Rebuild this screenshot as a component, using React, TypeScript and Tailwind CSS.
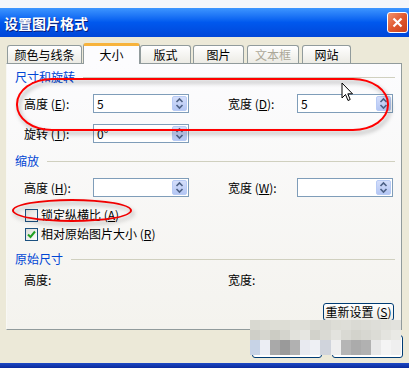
import React from "react";

const font = "[font-family:'Noto_Sans_CJK_SC','Liberation_Sans',sans-serif]";

function Spinner() {
  return (
    <div className="my-[1px] mr-[1px] flex w-[15px] flex-col items-center justify-center rounded-[2px] border border-[#B8CBF5] bg-gradient-to-b from-[#D4DEFA] to-[#B4C6F4]">
      <svg width="9" height="13" viewBox="0 0 9 13">
        <path d="M1.5 5 L4.5 2 L7.5 5" fill="none" stroke="#4D6185" strokeWidth="1.6" />
        <path d="M1.5 8 L4.5 11 L7.5 8" fill="none" stroke="#4D6185" strokeWidth="1.6" />
      </svg>
    </div>
  );
}

function NumBox({ value }: { value?: string }) {
  return (
    <div className="flex h-[19px] w-[96px] shrink-0 border border-[#7F9DB9] bg-white">
      <div className="flex-1 pl-[3px] text-[12px] leading-[17px] text-black">{value}</div>
      <Spinner />
    </div>
  );
}

function Field({ label, k, value }: { label: string; k: string; value?: string }) {
  return (
    <div className="flex w-[204px] shrink-0 items-center pl-[17px]">
      <div className="w-[69px] shrink-0 text-[12px] leading-[14px] text-black">
        {label} (<span className="underline">{k}</span>):
      </div>
      <NumBox value={value} />
    </div>
  );
}

function Heading({ text }: { text: string }) {
  return (
    <div className="flex h-[14px] items-center gap-[8px] pl-[8px] pr-[6px]">
      <span className="text-[12px] leading-[14px] text-[#0046D5]">{text}</span>
      <div className="h-px flex-1 bg-[#D0D0BF]" />
    </div>
  );
}

function Check({ checked, label, k }: { checked?: boolean; label: string; k: string }) {
  return (
    <div className="flex h-[14px] items-center gap-[3px] pl-[18px]">
      <div className="flex h-[13px] w-[13px] items-center justify-center border border-[#1C5180] bg-gradient-to-br from-[#DCDCD7] to-white">
        {checked && (
          <svg width="9" height="9" viewBox="0 0 9 9">
            <path d="M1 4.5 L3.5 7 L8 1.5" fill="none" stroke="#21A121" strokeWidth="2" />
          </svg>
        )}
      </div>
      <span className="text-[12px] leading-[14px] text-black">
        {label} (<span className="underline">{k}</span>)
      </span>
    </div>
  );
}

const tabs = [
  { t: "颜色与线条", w: "w-[75px]", ml: "ml-[7px]" },
  { t: "大小", w: "w-[57px]", ml: "ml-[1px]", active: true },
  { t: "版式", w: "w-[51px]", ml: "ml-[0px]" },
  { t: "图片", w: "w-[51px]", ml: "ml-[2px]" },
  { t: "文本框", w: "w-[52px]", ml: "ml-[3px]", disabled: true },
  { t: "网站", w: "w-[49px]", ml: "ml-[3px]" },
];

const mosaic = [
  ["#D9D9D1", "#DCDCD4", "#DEDED6", "#DDDDD5", "#E0E0D9", "#DFDFD8", "#DADAD3", "#D8D8D2", "#DDDDD6", "#DEDED8", "#DADAD4", "#DCDCD6", "#DEDED9", "#E0E0DA", "#E2E2DD"],
  ["#CFCFC8", "#D6D6CF", "#CCCCC4", "#D4D4CD", "#E2E2DC", "#E6E6E1", "#D2D2CB", "#DADAD4", "#E3E3DE", "#D9D9D3", "#D3D3CC", "#D7D7D1", "#DCDCD6", "#E4E4DF", "#E9E9E5"],
  ["#C7D3E6", "#ECEEF4", "#A9A9A9", "#9A9A9A", "#B1B1B1", "#E8EAF0", "#EEF0F4", "#D0D4DC", "#EFEFEF", "#B5B5B5", "#ABABAB", "#B1B1B1", "#E8E8E8", "#F4F4F4", "#EFEFEF"],
];

export default function App() {
  return (
    <div className={`relative h-[368px] w-[409px] overflow-hidden bg-[#ECE9D8] ${font}`}>
      {/* top strip */}
      <div className="h-[8px] bg-[#F4F6FB]" />

      {/* title bar */}
      <div className="flex h-[29px] items-center bg-gradient-to-b from-[#3D95FF] via-[#0058EE] to-[#0046D8] pl-[4px]">
        <span className="text-[14px] font-bold leading-[16px] text-white [text-shadow:1px_1px_0_#0A1E7A]">
          设置图片格式
        </span>
        <div className="ml-auto mr-[1px] flex h-[21px] w-[21px] items-center justify-center rounded-[3px] border border-white bg-gradient-to-br from-[#F0916C] via-[#E0592F] to-[#C9401E]">
          <svg width="11" height="11" viewBox="0 0 11 11">
            <path d="M1.5 1.5 L9.5 9.5 M9.5 1.5 L1.5 9.5" stroke="white" strokeWidth="2.2" />
          </svg>
        </div>
      </div>

      {/* tabs */}
      <div className="mt-[6px] flex h-[20px] items-end">
        {tabs.map((tab) =>
          tab.active ? (
            <div
              key={tab.t}
              className={`relative z-10 -mb-px flex h-[21px] ${tab.w} ${tab.ml} items-center justify-center rounded-t-[3px] border-x border-t-[3px] border-x-[#919B9C] border-t-[#F7B33C] bg-[#FCFCFE] text-[12px] leading-[14px] text-black`}
            >
              {tab.t}
            </div>
          ) : (
            <div
              key={tab.t}
              className={`flex h-[18px] ${tab.w} ${tab.ml} items-center justify-center rounded-t-[3px] border-x border-t border-[#919B9C] bg-gradient-to-b from-white to-[#ECEBE5] text-[12px] leading-[14px] ${tab.disabled ? "text-[#ACA899]" : "text-black"}`}
            >
              {tab.t}
            </div>
          )
        )}
      </div>

      {/* panel */}
      <div className="ml-[6px] flex h-[267px] w-[396px] flex-col overflow-hidden border border-[#919B9C] border-l-[#F8F8F4] bg-gradient-to-b from-[#FCFCFE] to-[#F4F3EE]">
        <div className="mt-[6px]">
          <Heading text="尺寸和旋转" />
        </div>
        <div className="mt-[10px] flex">
          <Field label="高度" k="E" value="5" />
          <Field label="宽度" k="D" value="5" />
        </div>
        <div className="mt-[11px] flex">
          <Field label="旋转" k="T" value="0°" />
        </div>
        <div className="mt-[11px]">
          <Heading text="缩放" />
        </div>
        <div className="mt-[10px] flex">
          <Field label="高度" k="H" />
          <Field label="宽度" k="W" />
        </div>
        <div className="mt-[11px]">
          <Check label="锁定纵横比" k="A" />
        </div>
        <div className="mt-[5px]">
          <Check checked label="相对原始图片大小" k="R" />
        </div>
        <div className="mt-[11px]">
          <Heading text="原始尺寸" />
        </div>
        <div className="mt-[7px] flex h-[14px] text-[12px] leading-[14px] text-black">
          <div className="w-[204px] shrink-0 pl-[17px]">高度:</div>
          <div className="pl-[17px]">宽度:</div>
        </div>
        <div className="mt-[16px] flex justify-end pr-[7px]">
          <div className="flex h-[18px] w-[71px] items-center justify-center rounded-[3px] border border-[#003C74] bg-gradient-to-b from-white to-[#ECEBE6] text-[12px] leading-[14px] text-black">
            重新设置 (<span className="underline">S</span>)
          </div>
        </div>
      </div>

      {/* bottom buttons */}
      <div className="flex h-[33px] items-center justify-end gap-[10px] pr-[6px]">
        <div className="flex h-[23px] w-[70px] items-center justify-center rounded-[3px] border border-[#003C74] bg-white text-[12px] text-black">确定</div>
        <div className="flex h-[23px] w-[71px] items-center justify-center rounded-[3px] border border-[#003C74] bg-white text-[12px] text-black">取消</div>
      </div>
      <div className="h-[5px] bg-gradient-to-b from-[#1D48C4] to-[#0A2A9C]" />

      {/* mosaic over the buttons */}
      <div className="absolute left-[250px] top-[320px] grid w-[151px] grid-cols-[repeat(15,1fr)] grid-rows-[10px_10px_15px]">
        {mosaic.flat().map((c, i) => (
          <div key={i} style={{ backgroundColor: c }} />
        ))}
      </div>

      {/* red annotation ellipses */}
      <div className="absolute left-[16px] top-[78px] h-[53px] w-[373px] rounded-[36px/26px] border-[2.5px] border-[#FF0000] drop-shadow-[2px_3px_2px_rgba(0,0,0,0.35)]" />
      <div className="absolute left-[12px] top-[199px] h-[23px] w-[120px] rounded-[50%] border-[2px] border-[#F00000] drop-shadow-[2px_3px_2px_rgba(0,0,0,0.3)]" />

      {/* mouse cursor */}
      <svg className="absolute left-[341px] top-[82px]" width="13" height="21" viewBox="0 0 13 21">
        <path d="M1 1 L1 16 L4.5 12.5 L7 18.5 L9.2 17.5 L6.8 11.8 L11.5 11.8 Z" fill="white" stroke="black" strokeWidth="1" strokeLinejoin="miter" />
      </svg>
    </div>
  );
}
